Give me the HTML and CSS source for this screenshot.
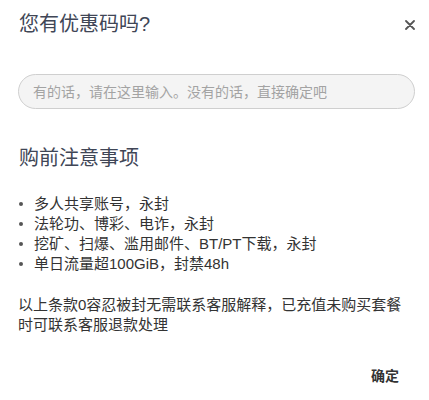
FILE: index.html
```html
<!DOCTYPE html>
<html lang="zh-CN">
<head>
<meta charset="utf-8">
<title>优惠码</title>
<link rel="stylesheet" href="styles.css">
</head>
<body>
<div class="dialog">
  <div class="header">
    <h1 class="title">您有优惠码吗?</h1>
    <button class="close" aria-label="关闭">
      <svg width="10" height="10" viewBox="0 0 10 10"><path d="M1 1 L9 9 M9 1 L1 9" stroke="#555" stroke-width="1.8" stroke-linecap="round" fill="none"/></svg>
    </button>
  </div>
  <input class="coupon" type="text" placeholder="有的话，请在这里输入。没有的话，直接确定吧">
  <h2 class="heading">购前注意事项</h2>
  <ul class="rules">
    <li>多人共享账号，永封</li>
    <li>法轮功、博彩、电诈，永封</li>
    <li>挖矿、扫爆、滥用邮件、BT/PT下载，永封</li>
    <li>单日流量超100GiB，封禁48h</li>
  </ul>
  <p class="note">以上条款0容忍被封无需联系客服解释，已充值未购买套餐时可联系客服退款处理</p>
  <div class="footer">
    <button class="ok">确定</button>
  </div>
</div>
</body>
</html>
```
FILE: styles.css
```css
* { box-sizing: border-box; }
html, body { margin: 0; padding: 0; background: #fff; }
body {
  font-family: "Liberation Sans", "Noto Sans CJK SC", sans-serif;
  color: #333;
}
.dialog {
  width: 429px;
  padding: 0 18px;
}
.header {
  height: 48px;
  display: flex;
  align-items: center;
  justify-content: space-between;
}
.title {
  margin: 0;
  font-size: 20px;
  font-weight: 400;
  line-height: 28px;
  color: #404656;
  padding-left: 1px;
}
.close {
  border: 0;
  background: none;
  padding: 0;
  margin-right: -4px;
  margin-top: 2px;
  width: 10px;
  height: 10px;
  display: flex;
  cursor: pointer;
}
.coupon {
  display: block;
  margin-top: 26px;
  width: 397px;
  height: 35px;
  border: 1px solid #cfcfcf;
  border-radius: 18px;
  background: #f4f4f4;
  padding: 0 14px;
  font-family: inherit;
  font-size: 14px;
  color: #333;
  outline: none;
}
.coupon::placeholder { color: #a3a3a3; }
.heading {
  margin: 35px 0 0;
  font-size: 20px;
  font-weight: 400;
  line-height: 28px;
  color: #404656;
  padding-left: 1px;
}
.rules {
  list-style: none;
  margin: 22px 0 0;
  padding: 0;
  font-size: 15px;
  line-height: 20px;
  color: #333;
}
.rules li {
  display: flex;
  align-items: center;
}
.rules li::before {
  content: "";
  width: 4px;
  height: 4px;
  border-radius: 50%;
  background: #555;
  margin: 0 11px 0 1px;
  flex: none;
}
.note {
  margin: 21px 0 0;
  font-size: 15px;
  line-height: 20px;
  color: #333;
}
.footer {
  margin-top: 25px;
  display: flex;
  justify-content: flex-end;
}
.ok {
  border: 0;
  background: none;
  font-family: inherit;
  font-size: 14px;
  font-weight: 600;
  line-height: 16px;
  padding: 8px 12px;
  color: #333;
  cursor: pointer;
}
```
